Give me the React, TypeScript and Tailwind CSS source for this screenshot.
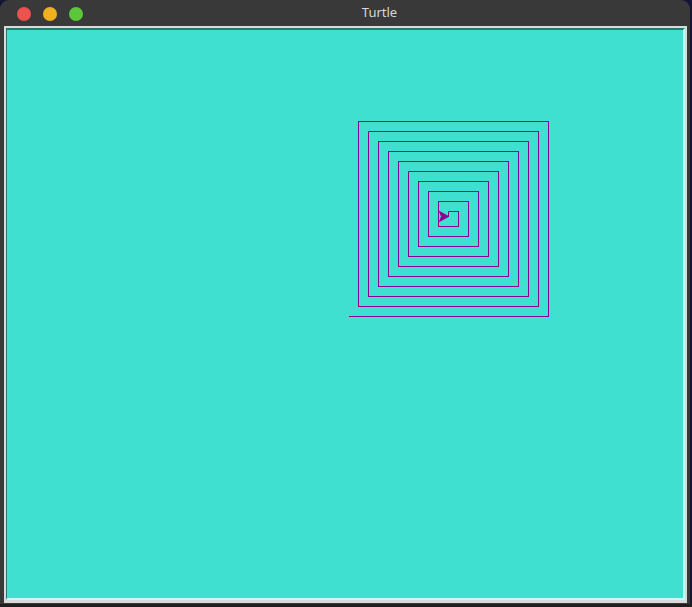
import React from 'react';

// spiral drawn by the turtle: starts at home, turns left after each step, step shrinks by 5
function spiralPoints() {
  const dirs = [
    [1, 0],
    [0, -1],
    [-1, 0],
    [0, 1],
  ];
  let x = 348;
  let y = 316;
  const pts: string[] = [`${x + 0.5},${y + 0.5}`];
  for (let i = 0; i < 40; i++) {
    const len = 200 - i * 5;
    const [dx, dy] = dirs[i % 4];
    x += dx * len;
    y += dy * len;
    pts.push(`${x + 0.5},${y + 0.5}`);
  }
  return { pts: pts.join(' '), x, y };
}

function TurtleCanvas() {
  const { pts, x, y } = spiralPoints();
  const tx = x + 0.5;
  const ty = y + 0.5;
  const shell = `${tx},${ty} ${tx - 9},${ty - 5} ${tx - 7},${ty} ${tx - 9},${ty + 5}`;
  return (
    <svg className="block h-full w-full" viewBox="7 30 676 568" width={676} height={568}>
      <polyline points={pts} fill="none" stroke="#8e008f" strokeWidth={1} shapeRendering="crispEdges" />
      <polygon points={shell} fill="#8e008f" stroke="#8e008f" strokeWidth={1} />
    </svg>
  );
}

export default function App() {
  return (
    <div className="flex h-[607px] w-[692px] flex-col bg-[#151537]" style={{ fontFamily: '"Noto Sans", sans-serif' }}>
      <div className="flex h-[604px] w-[690px] flex-col rounded-t-[9px] bg-[#393939]">
        <div className="flex h-[26px] items-center">
          <div className="flex gap-[12px] pl-[17px] pt-[1px]">
            <span className="h-[14px] w-[14px] rounded-full bg-[#ec5250]" />
            <span className="h-[14px] w-[14px] rounded-full bg-[#f1b11e]" />
            <span className="h-[14px] w-[14px] rounded-full bg-[#5bc739]" />
          </div>
          <div className="flex flex-1 justify-center pr-[14px] text-[13px] text-[#d8d8d8]">Turtle</div>
        </div>
        <div className="ml-[4px] flex h-[577px] w-[683px] bg-[#d9d9d9] pb-[3px] pl-[2px] pr-[2px] pt-[2px]">
          <div className="flex-1 border-b-[2px] border-l-[1px] border-r-[2px] border-t-[2px] border-b-[#c3fbf5] border-l-[#2b7770] border-r-[#c3fbf5] border-t-[#2b7770] bg-[#40e0d0]">
            <TurtleCanvas />
          </div>
        </div>
      </div>
      <div className="flex-1 bg-[#1f1f1f]" />
    </div>
  );
}
